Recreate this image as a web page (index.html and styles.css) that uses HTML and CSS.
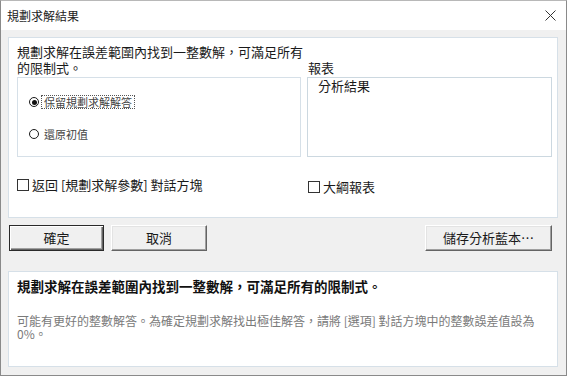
FILE: index.html
```html
<!DOCTYPE html>
<html lang="zh-Hant">
<head>
    <meta charset="UTF-8">
    <meta name="viewport" content="width=device-width, initial-scale=1.0">
    <title>規劃求解結果</title>
    <link rel="stylesheet" href="styles.css">
</head>
<body>
    <div class="dialog">
        <div class="titlebar">
            <span class="title">規劃求解結果</span>
            <svg class="close" width="11" height="11" viewBox="0 0 11 11">
                <path d="M0.5 0.5 L10.5 10.5 M10.5 0.5 L0.5 10.5" stroke="#333" stroke-width="1" fill="none"/>
            </svg>
        </div>

        <div class="content">
            <div class="panel main-panel">
                <div class="left-col">
                    <p class="message">規劃求解在誤差範圍內找到一整數解，可滿足所有</p>
                    <p class="message">的限制式。</p>
                    <div class="groupbox">
                        <div class="radio-row first">
                            <span class="radio checked"></span>
                            <span class="radio-label focus">保留規劃求解解答</span>
                        </div>
                        <div class="radio-row">
                            <span class="radio"></span>
                            <span class="radio-label">還原初值</span>
                        </div>
                    </div>
                    <div class="check-row">
                        <span class="checkbox"></span>
                        <span>返回 [規劃求解參數] 對話方塊</span>
                    </div>
                </div>

                <div class="right-col">
                    <div class="report-label">報表</div>
                    <div class="listbox">
                        <div class="list-item">分析結果</div>
                    </div>
                    <div class="check-row outline">
                        <span class="checkbox"></span>
                        <span>大綱報表</span>
                    </div>
                </div>
            </div>

            <div class="button-row">
                <button class="btn default ok">確定</button>
                <button class="btn cancel">取消</button>
                <button class="btn save">儲存分析藍本…</button>
            </div>

            <div class="panel status-panel">
                <p class="status-title">規劃求解在誤差範圍內找到一整數解，可滿足所有的限制式。</p>
                <p class="status-note">可能有更好的整數解答。為確定規劃求解找出極佳解答，請將 [選項] 對話方塊中的整數誤差值設為</p>
                <p class="status-note">0%。</p>
            </div>
        </div>
    </div>
</body>
</html>
```

FILE: styles.css
```css
body {
    margin: 0;
    font-family: "Noto Sans CJK TC", "Liberation Sans", sans-serif;
    color: #1a1a1a;
    background-color: #fff;
}
p {
    margin: 0;
}
.dialog {
    width: 567px;
    height: 376px;
    box-sizing: border-box;
    border: 1px solid #8a8a8a;
    border-top-color: #b8b8b8;
    display: flex;
    flex-direction: column;
    background-color: #f0f0f0;
}
.titlebar {
    height: 29px;
    background-color: #fff;
    display: flex;
    align-items: center;
    justify-content: space-between;
    padding: 0 10px 0 6px;
}
.title {
    font-size: 12px;
    line-height: 14px;
    color: #222;
}
.content {
    flex: 1;
    padding: 7px 8px 8px 7px;
    display: flex;
    flex-direction: column;
}
.panel {
    background-color: #fff;
    border: 1px solid #d6e0e8;
}
.main-panel {
    height: 181px;
    box-sizing: border-box;
    display: grid;
    grid-template-columns: 284px 245px;
    column-gap: 6px;
    padding: 6px 5px 0 8px;
    font-size: 13px;
    line-height: 16px;
}
.message {
    white-space: nowrap;
    height: 16px;
}
.groupbox {
    margin-top: 1px;
    height: 80px;
    box-sizing: border-box;
    border: 1px solid #d6e0e8;
    padding: 17px 0 0 11px;
}
.radio-row {
    display: flex;
    align-items: center;
    height: 14px;
    font-size: 11px;
    line-height: 12px;
    color: #444;
}
.radio-row + .radio-row {
    margin-top: 18px;
}
.radio {
    width: 10px;
    height: 10px;
    box-sizing: border-box;
    border: 1px solid #1a1a1a;
    border-radius: 50%;
    margin-right: 2px;
    display: flex;
    align-items: center;
    justify-content: center;
}
.radio.checked::after {
    content: "";
    width: 5px;
    height: 5px;
    border-radius: 50%;
    background-color: #111;
}
.radio-label {
    padding: 0 2px;
    border: 1px solid transparent;
}
.radio-label.focus {
    border: 1px dotted #555;
}
.check-row {
    display: flex;
    align-items: center;
    margin-top: 20px;
    white-space: nowrap;
}
.check-row.outline {
    margin-top: 22px;
    margin-left: 1px;
}
.checkbox {
    width: 12px;
    height: 12px;
    box-sizing: border-box;
    border: 1px solid #333;
    margin-right: 3px;
}
.report-label {
    margin-top: 16px;
    padding-left: 1px;
}
.listbox {
    margin-top: 1px;
    height: 80px;
    box-sizing: border-box;
    border: 1px solid #ccd8e0;
}
.list-item {
    padding-left: 10px;
}
.button-row {
    display: flex;
    margin-top: 7px;
    padding-left: 1px;
    padding-right: 6px;
}
.btn {
    height: 26px;
    box-sizing: border-box;
    font-family: "Noto Sans CJK TC", sans-serif;
    font-size: 13px;
    line-height: 16px;
    color: #1a1a1a;
    background-color: #f0f0f0;
    border: 1px solid;
    border-color: #fff #646464 #646464 #fff;
    box-shadow: inset -1px -1px #a0a0a0, inset 1px 1px #e3e3e3;
    padding: 0;
}
.btn.default {
    border-color: #2a2a2a;
    box-shadow: inset 1px 1px #fff, inset -1px -1px #646464, inset -2px -2px #a0a0a0;
}
.ok {
    width: 95px;
}
.cancel {
    width: 96px;
    margin-left: 7px;
}
.save {
    width: 127px;
    margin-left: auto;
}
.status-panel {
    margin-top: 20px;
    height: 96px;
    box-sizing: border-box;
    padding: 6px 8px 0 8px;
}
.status-title {
    font-size: 13.5px;
    line-height: 16px;
    font-weight: bold;
    color: #111;
    white-space: nowrap;
}
.status-note {
    font-size: 12px;
    line-height: 13px;
    color: #7a7a7a;
    white-space: nowrap;
}
.status-title + .status-note {
    margin-top: 20px;
}
```
